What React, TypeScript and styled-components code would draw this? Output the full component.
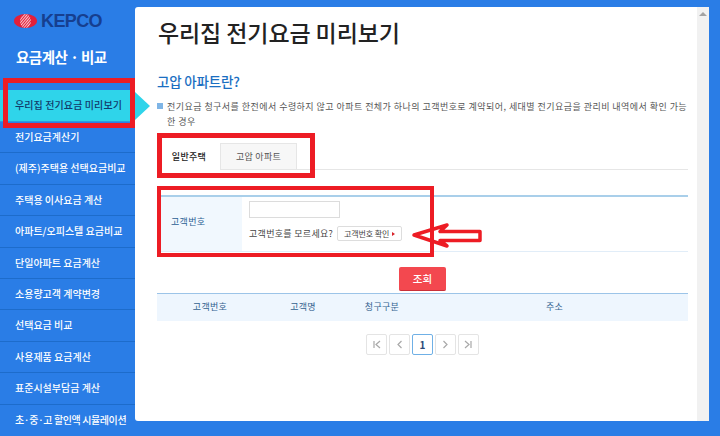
import * as React from "react";
import styled, { createGlobalStyle } from "styled-components";

const GlobalStyle = createGlobalStyle`
  html, body {
    margin: 0;
    padding: 0;
    background: #2a7de6;
  }
  * {
    box-sizing: border-box;
  }
`;

const FONT = `"Noto Sans CJK KR", "Noto Sans", sans-serif`;
const RED = "#ed1c24";

const Page = styled.div`
  position: relative;
  display: flex;
  width: 720px;
  height: 436px;
  overflow: hidden;
  background: #2a7de6;
  font-family: ${FONT};
`;

const Sidebar = styled.nav`
  flex: 0 0 135px;
  min-width: 0;
  display: flex;
  flex-direction: column;
`;

const LogoRow = styled.div`
  display: flex;
  align-items: center;
  gap: 4px;
  height: 20px;
  margin: 11px 0 0 14px;
`;

const LogoText = styled.span`
  font-family: "Liberation Sans", sans-serif;
  font-size: 18px;
  font-weight: 700;
  letter-spacing: -0.6px;
  color: #163f8f;
  line-height: 20px;
`;

const SideTitle = styled.h2`
  margin: 13px 0 0 16px;
  height: 26px;
  font-size: 14.5px;
  line-height: 26px;
  font-weight: 700;
  letter-spacing: -0.5px;
  color: #fff;
`;

const MenuList = styled.ul`
  list-style: none;
  margin: 20px 0 0;
  padding: 0;
`;

const MenuItem = styled.li<{ $active?: boolean }>`
  height: ${(p) => (p.$active ? "32px" : "31.4px")};
  padding-left: 15px;
  font-size: 10px;
  font-weight: 500;
  white-space: nowrap;
  line-height: 30px;
  letter-spacing: ${(p) => (p.$active ? "0.1px" : "0")};
  color: ${(p) => (p.$active ? "#123a6b" : "#fff")};
  background: ${(p) => (p.$active ? "#2fd4ea" : "transparent")};
  border-bottom: 1px solid ${(p) => (p.$active ? "#2a9fdc" : "#1d6ccb")};

  &:last-child {
    border-bottom: 0;
    letter-spacing: -0.4px;
  }
`;

const ActivePointer = styled.div`
  position: absolute;
  left: 135px;
  top: 92px;
  width: 0;
  height: 0;
  border-style: solid;
  border-width: 14px 0 14px 15px;
  border-color: transparent transparent transparent #2fd4ea;
`;

const Panel = styled.main`
  flex: 0 0 574px;
  display: flex;
  height: 414px;
  margin-top: 7px;
  background: #fff;
  border-radius: 3px 0 0 3px;
`;

const Content = styled.div`
  flex: 1;
  min-width: 0;
  padding: 8px 9px 0 22px;
`;

const Scrollbar = styled.div`
  flex: 0 0 12px;
  background: #f1f1f1;
  display: flex;
  justify-content: center;
  padding-top: 5px;
`;

const ScrollArrow = styled.div`
  width: 0;
  height: 0;
  border-style: solid;
  border-width: 0 4px 4px;
  border-color: transparent transparent #a3a3a3;
`;

const PageTitle = styled.h1`
  margin: 0 0 0 1px;
  font-size: 23px;
  line-height: 34px;
  font-weight: 500;
  letter-spacing: -0.1px;
  color: #222;
`;

const SectionTitle = styled.h3`
  margin: 22px 0 0;
  font-size: 13.5px;
  line-height: 20px;
  font-weight: 500;
  letter-spacing: -0.2px;
  color: #1b6fc2;
`;

const Desc = styled.p`
  position: relative;
  margin: 8px 0 0;
  padding-left: 10px;
  font-size: 9px;
  line-height: 15px;
  letter-spacing: 0.45px;
  word-break: break-all;
  color: #555;

  &::before {
    content: "";
    position: absolute;
    left: 0;
    top: 4px;
    width: 6px;
    height: 6px;
    background: #7fb5e6;
  }
`;

const TabBar = styled.div`
  display: flex;
  height: 27px;
  margin: 14px 0 0 1px;
  border-bottom: 1px solid #e6e6e6;
`;

const Tab = styled.div<{ $active?: boolean }>`
  width: ${(p) => (p.$active ? "62px" : "77px")};
  height: 27px;
  display: flex;
  align-items: center;
  justify-content: center;
  font-size: 9px;
  font-weight: ${(p) => (p.$active ? 500 : 400)};
  letter-spacing: 0.3px;
  color: ${(p) => (p.$active ? "#222" : "#555")};
  background: ${(p) => (p.$active ? "#fff" : "#f7f7f7")};
  border: ${(p) => (p.$active ? "0" : "1px solid #e6e6e6")};
`;

const FormTable = styled.div`
  display: flex;
  height: 57px;
  margin-top: 25px;
  border-top: 2px solid #a9cfea;
  border-bottom: 1px solid #e1edf8;
`;

const FormLabel = styled.div`
  flex: 0 0 85px;
  display: flex;
  align-items: center;
  padding: 0 0 6px 14px;
  background: #f1f8fe;
  font-size: 9px;
  letter-spacing: 0.3px;
  color: #2a5f94;
`;

const FormBody = styled.div`
  flex: 1;
  padding: 4px 0 0 7px;
`;

const TextInput = styled.div`
  width: 91px;
  height: 17px;
  border: 1px solid #dcdcdc;
  background: #fff;
`;

const HintRow = styled.div`
  display: flex;
  align-items: center;
  gap: 4px;
  margin-top: 8px;
  font-size: 9px;
  letter-spacing: 0.3px;
  color: #444;
`;

const SmallButton = styled.div`
  width: 65px;
  height: 15px;
  display: flex;
  align-items: center;
  justify-content: center;
  gap: 3px;
  border: 1px solid #ddd;
  border-radius: 2px;
  background: #fff;
  font-size: 8px;
  letter-spacing: -0.1px;
  color: #444;

  &::after {
    content: "";
    width: 0;
    height: 0;
    border-style: solid;
    border-width: 2.5px 0 2.5px 3px;
    border-color: transparent transparent transparent #d8222a;
  }
`;

const SearchRow = styled.div`
  display: flex;
  justify-content: center;
  margin-top: 15px;
`;

const SearchButton = styled.div`
  width: 47px;
  height: 24px;
  display: flex;
  align-items: center;
  justify-content: center;
  border-radius: 2px;
  border-bottom: 1px solid #c9303a;
  background: #f3484f;
  font-size: 10.5px;
  font-weight: 500;
  color: #fff;
`;

const ResultHead = styled.div`
  display: grid;
  grid-template-columns: 106px 80px 78px 1fr;
  align-items: center;
  height: 28px;
  margin-top: 2px;
  padding-bottom: 2px;
  border-top: 1px solid #9cc4e8;
  background: #eef6fe;
  font-size: 9px;
  letter-spacing: 0.3px;
  color: #33628f;
  text-align: center;
`;

const Pager = styled.div`
  display: flex;
  justify-content: center;
  gap: 2px;
  margin-top: 13px;
`;

const PageButton = styled.div<{ $current?: boolean }>`
  width: 21px;
  height: 21px;
  display: flex;
  align-items: center;
  justify-content: center;
  border: 1px solid ${(p) => (p.$current ? "#6fb0e6" : "#e4e4e4")};
  border-radius: 2px;
  font-size: 10px;
  font-weight: 700;
  color: #2c4a78;
  background: #fff;
`;

const PageIcon = styled.svg`
  display: block;
  width: 11px;
  height: 11px;
  fill: none;
  stroke: #a8a8a8;
  stroke-width: 1.2;
`;

const Annotation = styled.div<{ $x: number; $y: number; $w: number; $h: number; $t: number }>`
  position: absolute;
  left: ${(p) => p.$x}px;
  top: ${(p) => p.$y}px;
  width: ${(p) => p.$w}px;
  height: ${(p) => p.$h}px;
  border: ${(p) => p.$t}px solid ${RED};
  pointer-events: none;
`;

const ArrowMark = styled.svg`
  position: absolute;
  left: 411px;
  top: 222px;
  width: 72px;
  height: 28px;
`;

const menu = [
  "전기요금계산기",
  "(제주)주택용 선택요금비교",
  "주택용 이사요금 계산",
  "아파트/오피스텔 요금비교",
  "단일아파트 요금계산",
  "소용량고객 계약변경",
  "선택요금 비교",
  "사용제품 요금계산",
  "표준시설부담금 계산",
  "초·중·고 할인액 시뮬레이션",
];

const KepcoMark = () => (
  <svg width="23" height="14" viewBox="0 0 23 14">
    <defs>
      <pattern id="kepcoLines" width="2" height="2" patternUnits="userSpaceOnUse" patternTransform="rotate(-50)">
        <rect width="2" height="1" fill="#fff" opacity="0.75" />
      </pattern>
    </defs>
    <ellipse cx="11.5" cy="7" rx="11.5" ry="7" fill="#e3203a" />
    <ellipse cx="11.5" cy="7" rx="5.5" ry="7" fill="url(#kepcoLines)" />
  </svg>
);

const pagerPaths = [
  "M3 2v7M9 2L5 5.5 9 9",
  "M7.5 2L4 5.5 7.5 9",
  "",
  "M3.5 2L7 5.5 3.5 9",
  "M2 2l4 3.5L2 9M8 2v7",
];

export default function App() {
  return (
    <Page>
      <GlobalStyle />
      <Sidebar>
        <LogoRow>
          <KepcoMark />
          <LogoText>KEPCO</LogoText>
        </LogoRow>
        <SideTitle>요금계산 · 비교</SideTitle>
        <MenuList>
          <MenuItem $active>우리집 전기요금 미리보기</MenuItem>
          {menu.map((m) => (
            <MenuItem key={m}>{m}</MenuItem>
          ))}
        </MenuList>
      </Sidebar>
      <Panel>
        <Content>
          <PageTitle>우리집 전기요금 미리보기</PageTitle>
          <SectionTitle>고압 아파트란?</SectionTitle>
          <Desc>
            전기요금 청구서를 한전에서 수령하지 않고 아파트 전체가 하나의 고객번호로 계약되어, 세대별 전기요금을 관리비 내역에서 확인 가능한 경우
          </Desc>
          <TabBar>
            <Tab $active>일반주택</Tab>
            <Tab>고압 아파트</Tab>
          </TabBar>
          <FormTable>
            <FormLabel>고객번호</FormLabel>
            <FormBody>
              <TextInput />
              <HintRow>
                고객번호를 모르세요?
                <SmallButton>고객번호 확인</SmallButton>
              </HintRow>
            </FormBody>
          </FormTable>
          <SearchRow>
            <SearchButton>조회</SearchButton>
          </SearchRow>
          <ResultHead>
            <span>고객번호</span>
            <span>고객명</span>
            <span>청구구분</span>
            <span>주소</span>
          </ResultHead>
          <Pager>
            {pagerPaths.map((d, i) => (
              <PageButton key={i} $current={i === 2}>
                {d ? (
                  <PageIcon viewBox="0 0 11 11">
                    <path d={d} />
                  </PageIcon>
                ) : (
                  "1"
                )}
              </PageButton>
            ))}
          </Pager>
        </Content>
        <Scrollbar>
          <ScrollArrow />
        </Scrollbar>
      </Panel>
      <ActivePointer />
      <Annotation $x={3} $y={78} $w={132} $h={50} $t={5} />
      <Annotation $x={157} $y={133} $w={158} $h={45} $t={5} />
      <Annotation $x={157} $y={186} $w={277} $h={71} $t={4} />
      <ArrowMark viewBox="0 0 72 28">
        <path
          d="M3 13L36 3 29 9.5H69V18.5H29L36 24Z"
          fill="none"
          stroke={RED}
          strokeWidth="3.5"
          strokeLinejoin="round"
        />
      </ArrowMark>
    </Page>
  );
}
